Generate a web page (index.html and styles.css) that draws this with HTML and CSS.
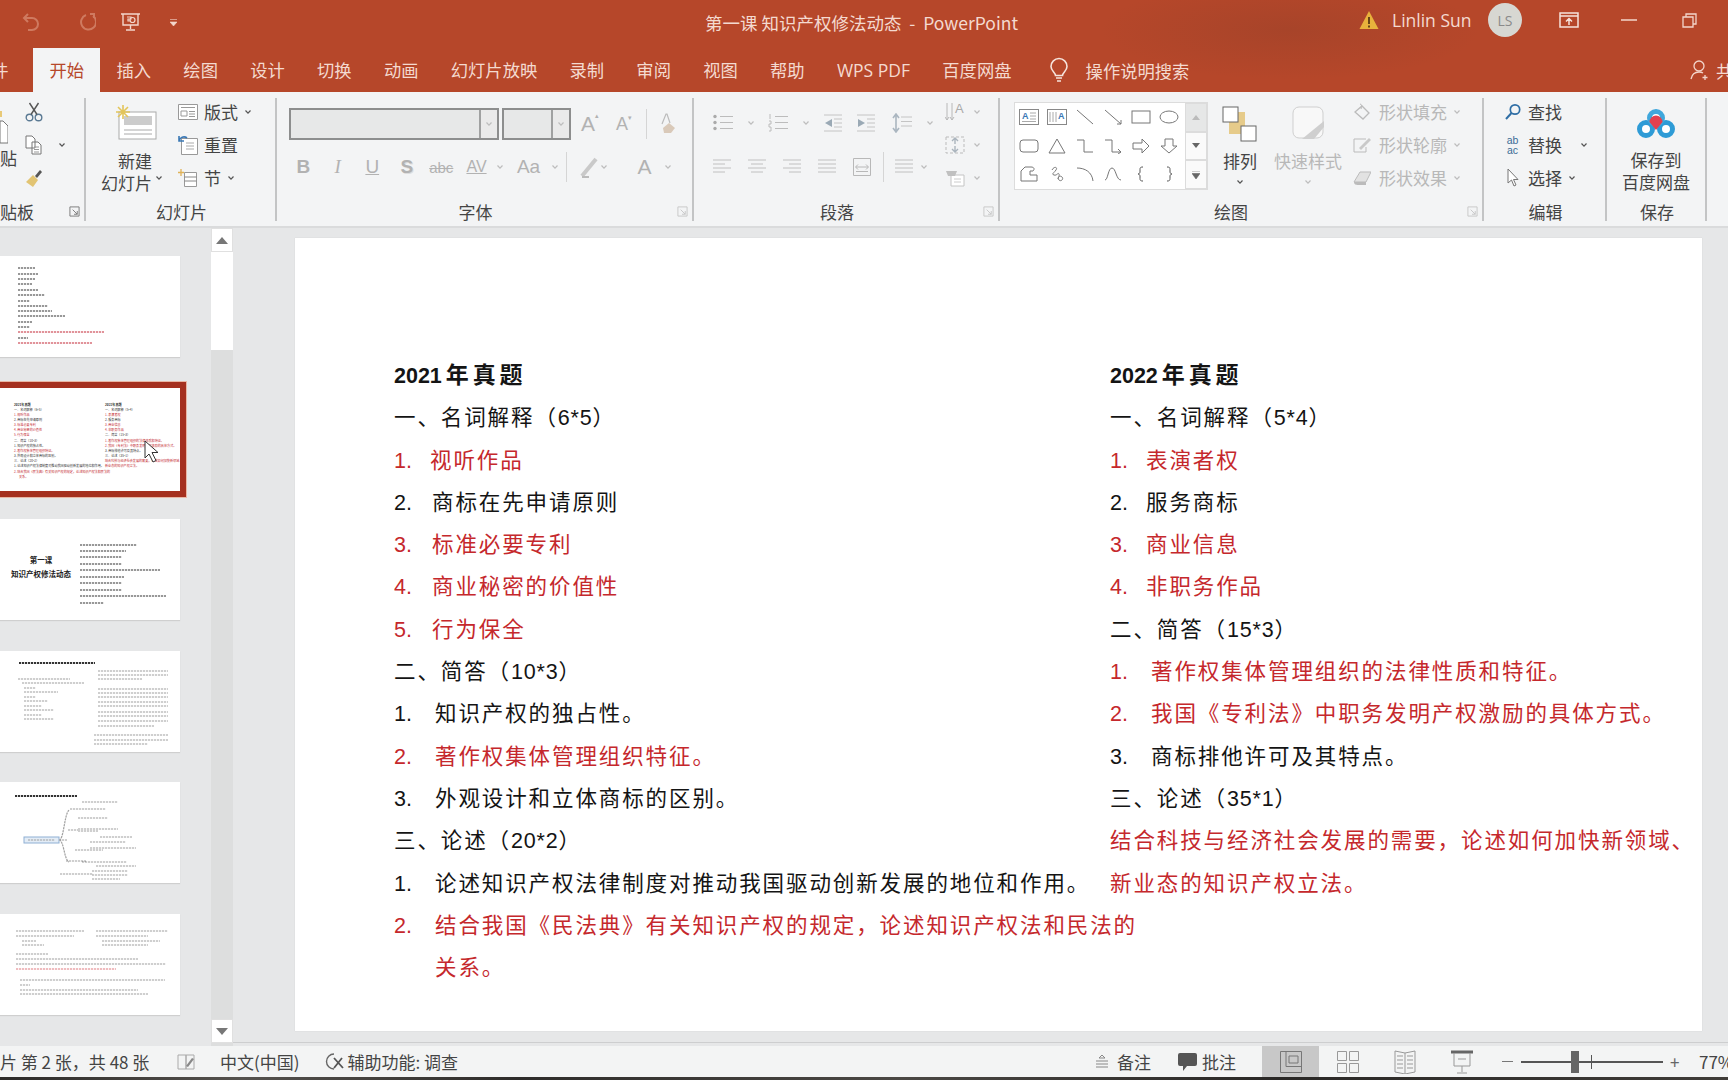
FILE: index.html
```html
<!DOCTYPE html>
<html lang="zh-CN">
<head>
<meta charset="utf-8">
<title>第一课 知识产权修法动态 - PowerPoint</title>
<link rel="stylesheet" href="styles.css">
</head>
<body>
<svg class="defs" width="0" height="0">
  <symbol id="chev" viewBox="0 0 10 10"><path d="M2.5 3.5 5 6.2 7.5 3.5" fill="none" stroke="currentColor" stroke-width="1.2"/></symbol>
  <symbol id="launch" viewBox="0 0 12 12"><path d="M1 1h10v10H1zM4 4l5 5M9 5.5V9H5.5" fill="none" stroke="currentColor" stroke-width="1"/></symbol>
</svg>
<div class="app">
  <header class="top">
    <div class="titlebar">
      <div class="qat">
        <svg class="qi q-undo" width="18" height="20" viewBox="0 0 18 20"><path d="M6 2 2 6l4 4M2 6h8a5.500 5.500 0 0 1 0 12H6" fill="none" stroke="#cf7a60" stroke-width="2"/></svg>
        <svg class="qi q-redo" width="18" height="20" viewBox="0 0 18 20"><path d="M12 2h4v4M15 4a7.500 7.500 0 1 1-7-1" fill="none" stroke="#cf7a60" stroke-width="2"/></svg>
        <svg class="qi q-show" width="21" height="20" viewBox="0 0 21 20"><path d="M1 2h19M3 2v11h15V2M10.500 13v4M6 18h9" fill="none" stroke="#f3d6cb" stroke-width="1.400"/><path d="M7 5h4v2H8v2h3M15 8a2.500 2.500 0 1 1-5 0 2.500 2.500 0 0 1 5 0z" fill="none" stroke="#f3d6cb" stroke-width="1.200"/></svg>
        <svg class="qi q-more" width="7" height="9" viewBox="0 0 7 9"><path d="M0 1.500h7M0 4h7L3.500 8z" fill="#f3d6cb" stroke="#f3d6cb" stroke-width=".6"/></svg>
      </div>
      <div class="doc-title">第一课 知识产权修法动态 &nbsp;-&nbsp; PowerPoint</div>
      <div class="account">
        <svg width="20" height="20" viewBox="0 0 20 20"><path d="M10 1 19.500 19H.5z" fill="#e8b23c"/><path d="M10 7v7M10 15.500v2" stroke="#5a3a14" stroke-width="1.800"/></svg>
        <span class="user">Linlin Sun</span>
        <span class="avatar">LS</span>
        <svg class="win w-ribbon" width="20" height="16" viewBox="0 0 20 16"><path d="M1 1h18v14H1zM1 4h18M10 13V7M7 9.500 10 6.500l3 3" fill="none" stroke="#f6e3db" stroke-width="1.500"/></svg>
        <svg class="win w-min" width="16" height="2" viewBox="0 0 16 2"><path d="M0 1h16" stroke="#f3d6cb" stroke-width="1.500"/></svg>
        <svg class="win w-max" width="15" height="15" viewBox="0 0 15 15"><path d="M1 4h10v10H1zM4 4V1h10v10h-3" fill="none" stroke="#f3d6cb" stroke-width="1.300"/></svg>
      </div>
    </div>
    <nav class="tabs">
      <span class="tab tab-file">文件</span>
      <span class="tab tab-on">开始</span>
      <span class="tab">插入</span>
      <span class="tab">绘图</span>
      <span class="tab">设计</span>
      <span class="tab">切换</span>
      <span class="tab">动画</span>
      <span class="tab">幻灯片放映</span>
      <span class="tab">录制</span>
      <span class="tab">审阅</span>
      <span class="tab">视图</span>
      <span class="tab">帮助</span>
      <span class="tab tab-latin">WPS PDF</span>
      <span class="tab">百度网盘</span>
      <svg class="bulb" width="22" height="26" viewBox="0 0 22 26"><path d="M7.500 18.500c0-3-4.500-4.500-4.500-9a8 8 0 0 1 16 0c0 4.500-4.500 6-4.500 9zM8 21h6M9 24h4" fill="none" stroke="#f6e3db" stroke-width="1.600"/></svg>
      <span class="tell">操作说明搜索</span>
      <span class="share">
        <svg width="20" height="22" viewBox="0 0 20 22"><circle cx="9" cy="7" r="5" fill="none" stroke="#f3d6cb" stroke-width="1.300"/><path d="M1 20c1-5 4-7 8-7 1.500 0 3 .3 4 1M15 16v5M12.500 18.500h5" fill="none" stroke="#f3d6cb" stroke-width="1.300"/></svg>
        <span>共享</span>
      </span>
    </nav>
  </header>

  <section class="ribbon">
    <div class="group g-clip">
      <div class="gbody">
        <div class="paste">
          <svg width="8" height="36" viewBox="0 0 8 36"><path d="M-8 2H2v6h-10z" fill="#e8c977"/><path d="M0 12h3l5 5v17H0z" fill="#fff" stroke="#777"/></svg>
          <span class="paste-t">粘贴</span>
        </div>
        <div class="col col-clip">
          <div class="row">
            <svg width="18" height="20" viewBox="0 0 18 20"><circle cx="4.500" cy="15.500" r="3.300" fill="none" stroke="#5b7a94" stroke-width="1.400"/><circle cx="13.500" cy="15.500" r="3.300" fill="none" stroke="#5b7a94" stroke-width="1.400"/><path d="M6 12.500 13.500 1M12 12.500 4.500 1" stroke="#555" stroke-width="1.400"/></svg>
          </div>
          <div class="row">
            <svg width="18" height="20" viewBox="0 0 18 20"><path d="M1 1h6l3 3v9H1zM7 7h6l3 3v9H7z" fill="#fff" stroke="#777"/><path d="M9 12h5M9 14.500h5M9 17h5" stroke="#999"/></svg>
            <svg class="dd dd-clip"><use href="#chev"/></svg>
          </div>
          <div class="row">
            <svg width="18" height="20" viewBox="0 0 18 20"><path d="M10 8 15 2l2 2-5 6z" fill="#555"/><path d="M8 7l5 5-5 7-7-5z" fill="#e2c473"/></svg>
          </div>
        </div>
      </div>
      <div class="glabel clip-label"><span>粘贴板</span><svg class="launcher"><use href="#launch"/></svg></div>
    </div>

    <div class="group g-slides">
      <div class="gbody">
        <div class="bigbtn bb-new">
          <svg width="42" height="36" viewBox="0 0 42 36"><rect x="4" y="8" width="37" height="27" fill="#fff" stroke="#aaa"/><rect x="9" y="12" width="28" height="9" fill="#ccc"/><path d="M9 26h28M9 30h28" stroke="#aaa"/><path d="M8 1v14M1 8h14M3 3l10 10M13 3 3 13" stroke="#e3c55a" stroke-width="1.600"/></svg>
          <span class="t2">新建</span>
          <span class="t2 t2-shift">幻灯片<svg class="dd"><use href="#chev"/></svg></span>
        </div>
        <div class="col col-slides">
          <div class="row"><svg width="20" height="16" viewBox="0 0 20 16"><path d="M.5.5h19v15H.5z" fill="#fff" stroke="#999"/><path d="M3 3.500h14M3 7h6v5H3zM11 7.500h6M11 10h6M11 12.500h6" stroke="#999" fill="none"/></svg><span class="rt">版式</span><svg class="dd"><use href="#chev"/></svg></div>
          <div class="row"><svg width="20" height="20" viewBox="0 0 20 20"><path d="M3.500 3.500h16v16h-16z" fill="#fff" stroke="#999"/><path d="M8 8h8M8 11h8M8 14h8" stroke="#aaa"/><path d="M1 6a5 5 0 0 1 8-3M1 1v5h5" fill="none" stroke="#3a78b5" stroke-width="1.600"/></svg><span class="rt">重置</span></div>
          <div class="row"><svg width="20" height="20" viewBox="0 0 20 20"><path d="M6.500 4.500h12v14h-12z" fill="#fff" stroke="#999"/><path d="M6.500 9h12M6.500 13h12" stroke="#888"/><path d="M3 1v7M0 4.500h6" stroke="#e0b257" stroke-width="1.300"/></svg><span class="rt sec">节</span><svg class="dd"><use href="#chev"/></svg></div>
        </div>
      </div>
      <div class="glabel"><span>幻灯片</span></div>
    </div>

    <div class="group g-font">
      <div class="gbody fontbody">
        <div class="frow">
          <div class="combo c-name"><i></i><b><svg class="dd off"><use href="#chev"/></svg></b></div>
          <div class="combo c-size"><i></i><b><svg class="dd off"><use href="#chev"/></svg></b></div>
          <span class="lt a-up">A<sup>▴</sup></span>
          <span class="lt a-dn">A<sup>▾</sup></span>
          <span class="vsep"></span>
          <svg class="clear" width="16" height="22" viewBox="0 0 16 22"><path d="M1 11 5 1h1l3 9" fill="none" stroke="#bbb" stroke-width="1.200"/><path d="M3 20l-1-5 6-5 6 5-4 5z" fill="#d9c9b9"/></svg>
        </div>
        <div class="frow frow2">
          <span class="fb f-b">B</span>
          <span class="fb f-i">I</span>
          <span class="fb f-u">U</span>
          <span class="fb f-s">S</span>
          <span class="fb f-abc">abc</span>
          <span class="fb f-av">AV</span>
          <svg class="dd off"><use href="#chev"/></svg>
          <span class="fb f-aa">Aa</span>
          <svg class="dd off"><use href="#chev"/></svg>
          <span class="vsep vsep-b"></span>
          <svg class="fmark" width="20" height="24" viewBox="0 0 20 24"><path d="M3 21 17 4" stroke="#c9c9c9" stroke-width="4"/><path d="M3 22h7" stroke="#bbb" stroke-width="2"/></svg>
          <svg class="dd off dd-m"><use href="#chev"/></svg>
          <span class="fb f-a">A</span>
          <svg class="dd off"><use href="#chev"/></svg>
        </div>
      </div>
      <div class="glabel label-shift"><span>字体</span><svg class="launcher off"><use href="#launch"/></svg></div>
    </div>

    <div class="group g-para">
      <div class="gbody parabody">
        <div class="pmain">
          <div class="prow">
            <svg class="pi" width="20" height="20" viewBox="0 0 20 20"><g fill="none" stroke="#bcbcbc"><path d="M7 3.500h13M7 9.500h13M7 15.500h13"/></g><g fill="#aaa"><circle cx="2" cy="3.500" r="1.700"/><circle cx="2" cy="9.500" r="1.700"/><circle cx="2" cy="15.500" r="1.700"/></g></svg>
            <svg class="dd off"><use href="#chev"/></svg>
            <svg class="pi" width="20" height="20" viewBox="0 0 20 20"><path d="M7 3.500h13M7 9.500h13M7 15.500h13M2 1v5M1 8h2v3H1v3h2v4H1" fill="none" stroke="#bcbcbc"/></svg>
            <svg class="dd off"><use href="#chev"/></svg>
            <svg class="pi" width="20" height="20" viewBox="0 0 20 20"><path d="M1 2h18M11 6h8M11 10h8M11 14h8M1 18h18" stroke="#c4c4c4" fill="none"/><path d="M9 6v8L2 10z" fill="#9aa9b5"/></svg>
            <svg class="pi pi-i" width="20" height="20" viewBox="0 0 20 20"><path d="M1 2h18M11 6h8M11 10h8M11 14h8M1 18h18" stroke="#c4c4c4" fill="none"/><path d="M2 6v8l7-4z" fill="#9aa9b5"/></svg>
            <svg class="pi pi-l" width="20" height="20" viewBox="0 0 20 20"><path d="M9 4h11M9 8.500h11M9 13h11" stroke="#c4c4c4" fill="none"/><path d="M4 1v18M1 5l3-4 3 4M1 15l3 4 3-4" fill="none" stroke="#aab6c0" stroke-width="1.600"/></svg>
            <svg class="dd off"><use href="#chev"/></svg>
          </div>
          <div class="prow prow2">
            <svg class="al" width="18" height="18" viewBox="0 0 18 18"><path d="M0 2h18M0 6h12M0 10h18M0 14h12" stroke="#c0c0c0" fill="none"/></svg>
            <svg class="al" width="18" height="18" viewBox="0 0 18 18"><path d="M0 2h18M3 6h12M0 10h18M3 14h12" stroke="#c0c0c0" fill="none"/></svg>
            <svg class="al" width="18" height="18" viewBox="0 0 18 18"><path d="M0 2h18M6 6h12M0 10h18M6 14h12" stroke="#c0c0c0" fill="none"/></svg>
            <svg class="al" width="18" height="18" viewBox="0 0 18 18"><path d="M0 2h18M0 6h18M0 10h18M0 14h18" stroke="#c0c0c0" fill="none"/></svg>
            <svg class="al al-d" width="18" height="18" viewBox="0 0 18 18"><path d="M.5.500h17v17H.5zM3 9h12M5 6.500 2.500 9 5 11.500M13 6.500 15.500 9 13 11.500M3 13.500h12" stroke="#b8b8b8" fill="none"/></svg>
            <span class="vsep vsep-p"></span>
            <svg class="al al-last" width="18" height="18" viewBox="0 0 18 18"><path d="M0 2h18M0 6h18M0 10h18M0 14h18" stroke="#c0c0c0" fill="none"/></svg>
            <svg class="dd off"><use href="#chev"/></svg>
          </div>
        </div>
        <div class="col col-dir">
          <div class="row"><svg width="20" height="20" viewBox="0 0 20 20"><path d="M2 1v17M7 1v17M0 15l2 3 2-3M5 15l2 3 2-3" stroke="#b8b8b8" fill="none"/><text class="dirA" x="10" y="11">A</text></svg><svg class="dd off"><use href="#chev"/></svg></div>
          <div class="row"><svg width="20" height="18" viewBox="0 0 20 18"><path d="M1 1h18v16H1z" fill="none" stroke="#bbb" stroke-dasharray="3 2"/><path d="M10 2v6M10 16v-6M7 5l3-3 3 3M7 13l3 3 3-3" stroke="#aab4bd" stroke-width="1.400" fill="none"/></svg><svg class="dd off"><use href="#chev"/></svg></div>
          <div class="row"><svg width="20" height="18" viewBox="0 0 20 18"><path d="M6 6h13v11H6z" fill="#fff" stroke="#c4c4c4"/><path d="M1 2h11l-2 5H3z" fill="#c0c0c0"/><path d="M9 10h7M9 13h7" stroke="#ccc"/></svg><svg class="dd off"><use href="#chev"/></svg></div>
        </div>
      </div>
      <div class="glabel label-shift"><span>段落</span><svg class="launcher off"><use href="#launch"/></svg></div>
    </div>

    <div class="group g-draw">
      <div class="gbody drawbody">
        <div class="gallery">
          <div class="shapes">
            <svg viewBox="0 0 20 16"><rect x=".5" y=".5" width="19" height="15" fill="#fff" stroke="#888"/><path d="M11 4h6M11 7h6M11 10h6M3 12.500h14" stroke="#aaa"/><text class="shapeA" x="3" y="10">A</text></svg>
            <svg viewBox="0 0 20 16"><rect x=".5" y=".5" width="19" height="15" fill="#fff" stroke="#888"/><path d="M3 3v10M6 3v10M9 3v10" stroke="#aaa"/><text class="shapeA" x="11" y="10">A</text></svg>
            <svg viewBox="0 0 20 16"><path d="M2 1 18 15" stroke="#777"/></svg>
            <svg viewBox="0 0 20 16"><path d="M2 1 18 15M14 15h4v-4" stroke="#777" fill="none"/></svg>
            <svg viewBox="0 0 20 16"><rect x="1" y="2" width="18" height="12" fill="none" stroke="#777"/></svg>
            <svg viewBox="0 0 20 16"><ellipse cx="10" cy="8" rx="9" ry="6" fill="none" stroke="#777"/></svg>
            <svg viewBox="0 0 20 16"><rect x="1" y="2" width="18" height="12" rx="3" fill="none" stroke="#777"/></svg>
            <svg viewBox="0 0 20 16"><path d="M10 1 18 15H2z" fill="none" stroke="#777"/></svg>
            <svg viewBox="0 0 20 16"><path d="M2 2h7v12h9" fill="none" stroke="#777"/></svg>
            <svg viewBox="0 0 20 16"><path d="M2 2h7v12h9M15 11l3 3-3 2" fill="none" stroke="#777"/></svg>
            <svg viewBox="0 0 20 16"><path d="M2 5h9V1l7 7-7 7v-4H2z" fill="none" stroke="#777"/></svg>
            <svg viewBox="0 0 20 16"><path d="M6 1h8v7h4l-8 7-8-7h4z" fill="none" stroke="#777"/></svg>
            <svg viewBox="0 0 20 16"><path d="M2 5 6 1h6c3 0 4 2 2 4h-3v4h7v6H2z" fill="none" stroke="#777"/></svg>
            <svg viewBox="0 0 20 16"><path d="M5 4c2-4 6-3 4 0S4 8 7 9s4-3 5-1-2 4 0 6 5-1 3-3-4 0-4 2" fill="none" stroke="#777"/></svg>
            <svg viewBox="0 0 20 16"><path d="M2 2c8 0 15 4 16 13" fill="none" stroke="#777"/></svg>
            <svg viewBox="0 0 20 16"><path d="M2 14C5 14 5 2 9 2s4 12 9 12" fill="none" stroke="#777"/></svg>
            <svg viewBox="0 0 20 16"><path d="M12 1c-3 0-3 1-3 3v2c0 1-1 2-2 2 1 0 2 1 2 2v2c0 2 0 3 3 3" fill="none" stroke="#555"/></svg>
            <svg viewBox="0 0 20 16"><path d="M8 1c3 0 3 1 3 3v2c0 1 1 2 2 2-1 0-2 1-2 2v2c0 2 0 3-3 3" fill="none" stroke="#555"/></svg>
          </div>
          <div class="gscroll">
            <span class="gs gs-up"><svg width="8" height="6" viewBox="0 0 8 6"><path d="M0 6 4 1l4 5z" fill="#bbb"/></svg></span>
            <span class="gs"><svg width="8" height="6" viewBox="0 0 8 6"><path d="M0 0h8L4 5z" fill="#666"/></svg></span>
            <span class="gs"><svg width="8" height="8" viewBox="0 0 8 8"><path d="M0 0h8M0 2.500h8L4 8z" fill="#666" stroke="#666" stroke-width=".6"/></svg></span>
          </div>
        </div>
        <div class="bigbtn bb-arr">
          <svg width="36" height="36" viewBox="0 0 36 36"><rect x="7" y="6" width="16" height="22" fill="#e6cb8a"/><rect x="1" y="1" width="15" height="15" fill="#fff" stroke="#666"/><rect x="19" y="20" width="15" height="15" fill="#fff" stroke="#666"/></svg>
          <span class="t2">排列</span>
          <svg class="dd"><use href="#chev"/></svg>
        </div>
        <div class="bigbtn bb-quick off-t">
          <svg width="36" height="36" viewBox="0 0 36 36"><rect x="3" y="1" width="30" height="31" rx="6" fill="#f8f8f8" stroke="#cfcfcf"/><path d="M12 33 34 15v6L24 33z" fill="#cfcfcf"/></svg>
          <span class="t2">快速样式</span>
          <svg class="dd off"><use href="#chev"/></svg>
        </div>
        <div class="col col-style off-t">
          <div class="row"><svg width="18" height="18" viewBox="0 0 18 18"><path d="M2 9 9 3l7 7-6 6z" fill="none" stroke="#bbb" stroke-width="1.300"/><path d="M7 1c2 0 2 3 1 5" fill="none" stroke="#bbb"/></svg><span class="rt">形状填充</span><svg class="dd off"><use href="#chev"/></svg></div>
          <div class="row"><svg width="18" height="18" viewBox="0 0 18 18"><path d="M1 3h12M1 3v13h12v-5" fill="none" stroke="#bbb"/><path d="M6 12 16 2l2 2L8 14z" fill="#c9c9c9"/></svg><span class="rt">形状轮廓</span><svg class="dd off"><use href="#chev"/></svg></div>
          <div class="row"><svg width="18" height="18" viewBox="0 0 18 18"><path d="M1 13 7 3h11l-5 10z" fill="#e2e2e2" stroke="#bbb"/><path d="M1 13c0 3 3 3 5 3h7l0-3z" fill="#bbb"/></svg><span class="rt">形状效果</span><svg class="dd off"><use href="#chev"/></svg></div>
        </div>
      </div>
      <div class="glabel draw-label"><span>绘图</span><svg class="launcher off"><use href="#launch"/></svg></div>
    </div>

    <div class="group g-edit">
      <div class="gbody">
        <div class="col col-edit">
          <div class="row"><span class="edit-i"><svg width="16" height="17" viewBox="0 0 16 17"><circle cx="10" cy="6.500" r="4.700" fill="none" stroke="#2f6ea5" stroke-width="1.700"/><path d="M6.500 10 1 16" stroke="#2f6ea5" stroke-width="2"/></svg></span><span class="rt">查找</span></div>
          <div class="row"><span class="edit-i edit-ab">ab<br>ac</span><span class="rt">替换</span><svg class="dd dd-rep"><use href="#chev"/></svg></div>
          <div class="row"><span class="edit-i"><svg width="14" height="20" viewBox="0 0 14 20"><path d="M2 1v14l3.500-3 2.500 6 2-1-2.500-5.500h4.500z" fill="#fff" stroke="#777"/></svg></span><span class="rt">选择</span><svg class="dd"><use href="#chev"/></svg></div>
        </div>
      </div>
      <div class="glabel"><span>编辑</span></div>
    </div>

    <div class="group g-save">
      <div class="gbody">
        <div class="bigbtn bb-save">
          <svg width="38" height="32" viewBox="0 0 38 32"><circle cx="9" cy="21" r="6.500" fill="#fff" stroke="#2e9bd6" stroke-width="5"/><circle cx="29" cy="21" r="6.500" fill="#fff" stroke="#2e9bd6" stroke-width="5"/><circle cx="19" cy="10" r="6.500" fill="#fff" stroke="#3fa7dc" stroke-width="5"/><path d="M19 22 12.500 14a6 6 0 0 1 13 0z" fill="#e2404f"/></svg>
          <span class="t2 save-t1">保存到</span>
          <span class="t2">百度网盘</span>
        </div>
      </div>
      <div class="glabel"><span>保存</span></div>
    </div>
  </section>

  <main class="workspace">
    <aside class="thumbs">
      <div class="thumb">
        <svg viewBox="0 0 180 101"><g class="dash"><path d="M18 12h17M18 18h20M18 23h17M18 28h14M18 34h20M18 39h27M18 45h12M18 50h30M18 55h34M18 60h47M18 66h14"/><path class="dash-r" d="M18 76h86M18 87h74"/><path d="M18 71h12M18 82h10"/></g></svg>
      </div>
      <div class="thumb thumb-on">
        <div class="mini">
          <div class="mini-col">
            <p class="mh">2021年真题</p><p>一、名词解释（6*5）</p><p class="r">1. 视听作品</p><p>2. 商标在先申请原则</p><p class="r">3. 标准必要专利</p><p class="r">4. 商业秘密的价值性</p><p class="r">5. 行为保全</p><p>二、简答（10*3）</p><p>1. 知识产权的独占性。</p><p class="r">2. 著作权集体管理组织特征。</p><p>3. 外观设计和立体商标的区别。</p><p>三、论述（20*2）</p><p>1. 论述知识产权法律制度对推动我国驱动创新发展的地位和作用。</p><p class="r">2. 结合我国《民法典》有关知识产权的规定，论述知识产权法和民法的</p><p class="r ind">关系。</p>
          </div>
          <div class="mini-col">
            <p class="mh">2022年真题</p><p>一、名词解释（5*4）</p><p class="r">1. 表演者权</p><p>2. 服务商标</p><p class="r">3. 商业信息</p><p class="r">4. 非职务作品</p><p>二、简答（15*3）</p><p class="r">1. 著作权集体管理组织的法律性质和特征。</p><p class="r">2. 我国《专利法》中职务发明产权激励的具体方式。</p><p>3. 商标排他许可及其特点。</p><p>三、论述（35*1）</p><p class="r">结合科技与经济社会发展的需要，论述如何加快新领域、</p><p class="r">新业态的知识产权立法。</p>
          </div>
        </div>
        <svg class="pointer" width="16" height="24" viewBox="0 0 16 24"><path d="M1 1v17l4-4 4 8 3-1.500-4-8h6z" fill="#fff" stroke="#333"/></svg>
      </div>
      <div class="thumb thumb-title">
        <div class="ttl"><strong>第一课</strong><strong>知识产权修法动态</strong></div>
        <svg viewBox="0 0 180 101"><g class="dash"><path d="M80 26h57M80 32h46M80 38h42M80 45h42M80 51h80M80 58h44M80 64h42M80 71h42M80 77h86M80 84h24"/></g></svg>
      </div>
      <div class="thumb">
        <svg viewBox="0 0 180 101"><g class="dash thin"><path class="dash-b" d="M19 12h76"/><path d="M18 28h52M22 32h62M24 37h12M24 41h34M24 46h12M24 50h24M24 55h18M24 59h30M24 64h18M24 68h30M98 20h70M98 24h70M98 28h44M98 38h70M98 42h70M98 46h70M98 51h70M98 55h70M98 61h70M98 65h70M98 70h70M98 75h56M94 84h74M94 89h74M94 93h54"/></g></svg>
      </div>
      <div class="thumb">
        <svg viewBox="0 0 180 101"><g class="dash"><path class="dash-b" d="M15 14h62"/></g><rect x="24" y="55" width="35" height="6" fill="#e3ecf6" stroke="#8fb0d4"/><g class="dash thin map"><path d="M28 58h27M82 20h36M70 27h36M78 36h30M78 47h40M78 49h20M68 48h10M100 55h32M90 60h36M75 68h28M90 66h46M82 80h45M66 79h20M96 84h40M60 92h33M92 89h36M92 93h36M92 97h28"/><path d="M59 58c5 0 5-25 10-30M59 58h8M59 58c5 0 5 20 10 22"/></g></svg>
      </div>
      <div class="thumb">
        <svg viewBox="0 0 180 101"><g class="dash thin"><path d="M16 17h68M96 17h72M16 22h58M96 22h52M22 27h14M102 27h58M22 31h22M102 31h46M16 40h32M16 45h122M16 50h150"/><path class="dash-r" d="M16 55h100M16 50h0"/><path d="M20 66h145M20 71h10M20 76h118M20 80h128"/></g></svg>
      </div>
    </aside>
    <div class="vscroll">
      <span class="sbtn"><svg width="12" height="7" viewBox="0 0 12 7"><path d="M0 7 6 0l6 7z" fill="#777"/></svg></span>
      <span class="sthumb"></span>
      <span class="strack"></span>
      <span class="sbtn"><svg width="12" height="7" viewBox="0 0 12 7"><path d="M0 0h12L6 7z" fill="#777"/></svg></span>
    </div>
    <div class="stage">
      <article class="slide">
        <div class="scol scol-a">
          <p class="h"><span class="lat">2021</span>年真题</p>
          <p>一、名词解释（<span class="lat">6*5</span>）</p>
          <p class="red"><span class="n n-s">1.</span>视听作品</p>
          <p><span class="n">2.</span>商标在先申请原则</p>
          <p class="red"><span class="n">3.</span>标准必要专利</p>
          <p class="red"><span class="n">4.</span>商业秘密的价值性</p>
          <p class="red"><span class="n">5.</span>行为保全</p>
          <p>二、简答（<span class="lat">10*3</span>）</p>
          <p><span class="n n-w">1.</span>知识产权的独占性。</p>
          <p class="red"><span class="n n-w">2.</span>著作权集体管理组织特征。</p>
          <p><span class="n n-w">3.</span>外观设计和立体商标的区别。</p>
          <p>三、论述（<span class="lat">20*2</span>）</p>
          <p><span class="n n-w">1.</span>论述知识产权法律制度对推动我国驱动创新发展的地位和作用。</p>
          <p class="red"><span class="n n-w">2.</span>结合我国《民法典》有关知识产权的规定，论述知识产权法和民法的</p>
          <p class="red"><span class="n n-w"></span>关系。</p>
        </div>
        <div class="scol">
          <p class="h"><span class="lat">2022</span>年真题</p>
          <p>一、名词解释（<span class="lat">5*4</span>）</p>
          <p class="red"><span class="n n-s">1.</span>表演者权</p>
          <p><span class="n n-s">2.</span>服务商标</p>
          <p class="red"><span class="n n-s">3.</span>商业信息</p>
          <p class="red"><span class="n n-s">4.</span>非职务作品</p>
          <p>二、简答（<span class="lat">15*3</span>）</p>
          <p class="red"><span class="n n-w">1.</span>著作权集体管理组织的法律性质和特征。</p>
          <p class="red"><span class="n n-w">2.</span>我国《专利法》中职务发明产权激励的具体方式。</p>
          <p><span class="n n-w">3.</span>商标排他许可及其特点。</p>
          <p>三、论述（<span class="lat">35*1</span>）</p>
          <p class="red">结合科技与经济社会发展的需要，论述如何加快新领域、</p>
          <p class="red">新业态的知识产权立法。</p>
        </div>
      </article>
    </div>
  </main>

  <footer class="status">
    <span class="st st-count">幻灯片 第 2 张，共 48 张</span>
    <svg class="st-note" width="18" height="16" viewBox="0 0 18 16"><path d="M1 1h8v14H1zM9 1h8v14H9z" fill="none" stroke="#aaa"/><path d="M9 12l6-8 2 1-6 8z" fill="#888"/></svg>
    <span class="st st-lang">中文(中国)</span>
    <svg class="st-acc" width="20" height="20" viewBox="0 0 20 20"><path d="M9 2a7 7 0 1 0 0 15" fill="none" stroke="#666" stroke-width="1.400"/><path d="M9 6 18 16M17 6l-8 10" stroke="#555" stroke-width="1.800"/></svg>
    <span class="st">辅助功能: 调查</span>
    <span class="st-right">
      <svg class="st-ni" width="12" height="14" viewBox="0 0 12 14"><path d="M6 0 3 3h6zM0 6h12M0 9h12M0 12h12" fill="none" stroke="#888"/></svg>
      <span class="st st-bz">备注</span>
      <svg class="st-ci" width="19" height="18" viewBox="0 0 19 18"><path d="M2 0h15a2 2 0 0 1 2 2v9a2 2 0 0 1-2 2H9l-4 5v-5H2a2 2 0 0 1-2-2V2a2 2 0 0 1 2-2z" fill="#555"/></svg>
      <span class="st st-pz">批注</span>
      <span class="view view-on"><svg width="22" height="22" viewBox="0 0 22 22"><path d="M.5.500h21v21H.5zM6 .5v15h15.500M9 5h9v7H9z" fill="none" stroke="#777"/></svg></span>
      <span class="view"><svg width="22" height="22" viewBox="0 0 22 22"><path d="M.5.500h9v9h-9zM12.500.5h9v9h-9zM.5 12.500h9v9h-9zM12.500 12.500h9v9h-9z" fill="none" stroke="#999"/></svg></span>
      <span class="view"><svg width="22" height="24" viewBox="0 0 22 24"><path d="M1 1l10 2 10-2v21l-10 2L1 22zM11 3v21M3 6h6M3 10h6M3 14h6M3 18h6M13 6h6M13 10h6M13 14h6M13 18h6" fill="none" stroke="#999"/></svg></span>
      <span class="view"><svg width="22" height="24" viewBox="0 0 22 24"><path d="M0 2h22" stroke="#666" stroke-width="3"/><path d="M3 3v13h16V3M11 16v6M6 23h10M7 9h8" fill="none" stroke="#999"/></svg></span>
      <span class="zoom">
        <i class="z-minus"></i>
        <span class="z-track"><span class="z-mid"></span><span class="z-knob"></span></span>
        <span class="z-plus">+</span>
        <span class="st z-val">77%</span>
      </span>
    </span>
  </footer>
  <div class="under"></div>
</div>
</body>
</html>
```

FILE: styles.css
```css
* { box-sizing: border-box; }
html, body { margin: 0; height: 100%; overflow: hidden; }
body {
  font-family: "Noto Sans CJK SC", "Noto Sans", sans-serif;
  background: #e6e7e8;
  color: #444;
}
.defs { position: absolute; }
.app { width: 1728px; height: 1080px; display: flex; flex-direction: column; overflow: hidden; }
p { margin: 0; }
svg { flex: none; display: block; }

/* title bar and tabs */
.top {
  height: 92px;
  background:
    radial-gradient(ellipse 190px 50px at 1290px 30px, rgba(130, 60, 40, .28), transparent),
    #b6472a;
  color: #f4dad0;
}
.titlebar { height: 48px; display: flex; align-items: center; }
.qat { width: 705px; display: flex; align-items: center; padding-bottom: 4px; }
.q-undo { margin-left: 22px; }
.q-redo { margin-left: 38px; }
.q-show { margin-left: 24px; }
.q-more { margin-left: 29px; }
.doc-title { font-size: 17.500px; padding-bottom: 4px; white-space: nowrap; }
.account { margin-left: auto; display: flex; align-items: center; padding-bottom: 8px; }
.user { font-family: "Open Sans", sans-serif; font-size: 17.500px; margin: 0 0 0 13px; width: 96px; }
.avatar {
  width: 34px; height: 34px; border-radius: 50%;
  background: #d7d7d2; color: #8a8a8a;
  font-family: "Open Sans", sans-serif; font-size: 14px;
  display: flex; align-items: center; justify-content: center;
}
.w-ribbon { margin-left: 37px; }
.w-min { margin-left: 42px; }
.w-max { margin: 0 31px 0 45px; }
.tabs { height: 44px; display: flex; align-items: center; white-space: nowrap; font-size: 17.300px; }
.tab { padding: 0 16.150px; height: 44px; line-height: 44px; }
.tab-file { width: 33px; padding: 0; text-indent: -26px; overflow: hidden; }
.tab-on { background: #f3f4f5; color: #b6472a; padding: 0 16.400px; }
.tab-latin { font-family: "Open Sans", sans-serif; font-size: 17.500px; }
.bulb { margin-left: 20px; }
.tell { margin-left: 16px; }
.share { margin-left: auto; display: flex; align-items: center; gap: 6px; width: 38px; overflow: hidden; flex: none; }

/* ribbon */
.ribbon {
  height: 136px; display: flex;
  background: #f3f4f5;
  border-bottom: 2px solid #dadbdc;
  padding-top: 3px;
  font-size: 17px;
  color: #444;
}
.group { position: relative; display: flex; flex-direction: column; flex: none; }
.group::after {
  content: ""; position: absolute; right: 0; top: 3px; bottom: 5px;
  width: 2px; background: #c3c4c5;
}
.gbody { height: 99px; display: flex; }
.glabel {
  height: 32px; display: flex; align-items: center; justify-content: center;
  position: relative; padding-top: 3px; white-space: nowrap;
}
.label-shift { padding-right: 20px; }
.launcher { position: absolute; right: 6px; top: 12px; width: 11px; height: 11px; color: #777; }
.launcher.off { color: #c6c6c6; }
.dd { width: 10px; height: 10px; color: #555; margin-left: 5px; }
.dd.off { color: #bdbdbd; margin-left: 0; }
.col { display: flex; flex-direction: column; }
.row { height: 33px; display: flex; align-items: center; white-space: nowrap; }
.rt { margin-left: 6px; }
.bigbtn { display: flex; flex-direction: column; align-items: center; white-space: nowrap; line-height: 22px; }
.t2 { display: flex; align-items: center; }
.off-t { color: #b8b8b8; }

.g-clip { width: 86px; }
.paste { width: 25px; padding-top: 14px; overflow: hidden; }
.paste-t { display: block; margin: 2px 0 0 -17px; white-space: nowrap; line-height: 22px; }
.dd-clip { margin-left: 14px; }
.clip-label { justify-content: flex-start; }
.clip-label span { margin-left: -17px; }

.g-slides { width: 191px; }
.bb-new { width: 68px; margin-left: 15px; padding-top: 9px; }
.bb-new svg:first-child { margin: 0 0 10px 2px; }
.bb-new .t2-shift { align-self: flex-start; margin-left: 0; }
.col-slides { margin-left: 9px; }
.sec { margin-left: 6px; }

.g-font { width: 417px; }
.fontbody { flex-direction: column; padding: 13px 0 0 12px; }
.frow { display: flex; align-items: center; height: 32px; }
.frow2 { margin-top: 11px; color: #b2b2b2; font-family: "Liberation Sans", sans-serif; font-size: 19px; margin-left: -3px; }
.combo { height: 32px; display: flex; background: #e7e8e8; border: 2px solid #8d8e8e; }
.combo i { flex: 1; }
.combo b { width: 18px; border-left: 2px solid #a0a1a1; display: flex; align-items: center; justify-content: center; background: #eaeaea; }
.combo .dd { margin: 0; }
.c-name { width: 210px; }
.c-size { width: 69px; margin-left: 3px; }
.lt { font-family: "Liberation Sans", sans-serif; color: #b2b2b2; display: flex; }
.lt sup { font-size: 7px; line-height: 8px; }
.a-up { font-size: 21px; margin-left: 10px; width: 35px; }
.a-dn { font-size: 18px; width: 30px; }
.vsep { width: 1px; height: 30px; background: #d5d5d5; display: block; }
.clear { margin-left: 14px; }
.fb { display: block; width: 34.500px; text-align: center; }
.f-b { font-weight: 700; }
.f-i { font-style: italic; font-family: "Liberation Serif", serif; }
.f-u { text-decoration: underline; }
.f-s { font-weight: 700; text-shadow: 1px 1px 0 #ddd; }
.f-abc { font-size: 15px; text-decoration: line-through; }
.f-av { font-size: 16px; text-decoration: underline; width: 36px; }
.f-aa { margin-left: 3px; width: 42px; }
.f-a { width: 36px; font-size: 21px; margin-left: 16px; }
.vsep-b { margin-left: 6px; }
.fmark { margin-left: 12px; }
.dd-m { margin: 0 2px 0 16px; }

.g-para { width: 306px; }
.parabody { padding: 6px 0 0 19px; }
.pmain { width: 232px; }
.prow { height: 44px; display: flex; align-items: center; }
.prow .dd { margin: 0 12px 0 13px; }
.pi-i { margin-left: 13px; }
.pi-l { margin-left: 16px; }
.al { margin-right: 17px; }
.al-d { margin-right: 12px; }
.al-last { margin-right: 6px; }
.vsep-p { margin-right: 11px; }
.prow2 .dd { margin: 0; }
.col-dir { margin: -6px 0 0 0; }
.col-dir .row { gap: 7px; }
.dirA { font-family: "Liberation Sans", sans-serif; font-size: 13px; fill: #aaa; }

.g-draw { width: 484px; }
.drawbody { padding: 8px 0 0 15px; }
.gallery { width: 192px; height: 86px; display: flex; background: #fff; box-shadow: 0 0 0 1px #dcdcdc; }
.shapes { width: 170px; display: grid; grid-template-columns: repeat(6, 28px); grid-template-rows: repeat(3, 28.600px); }
.shapes svg { width: 20px; height: 16px; place-self: center; }
.shapeA { font-family: "Liberation Sans", sans-serif; font-size: 9px; font-weight: 700; fill: #3a78b5; }
.gscroll { width: 22px; display: flex; flex-direction: column; }
.gs { flex: 1; display: flex; align-items: center; justify-content: center; border: 1px solid #dcdcdc; background: #fafafa; }
.gs-up { background: #e6e7e7; }
.bb-arr { width: 40px; margin-left: 13px; padding-top: 3px; }
.bb-arr svg:first-child, .bb-quick svg:first-child { margin-bottom: 8px; }
.bb-arr .dd, .bb-quick .dd { margin: 5px 0 0; }
.bb-quick { width: 70px; margin-left: 13px; padding-top: 3px; }
.col-style { margin: -8px 0 0 10px; }
.col-style .rt { margin-left: 8px; margin-right: 5px; }
.draw-label { justify-content: flex-start; padding-left: 214px; }

.g-edit { width: 123px; }
.col-edit { margin-left: 19px; }
.edit-i { width: 19px; display: flex; justify-content: center; align-items: center; }
.edit-ab { display: block; font-family: "Liberation Sans", sans-serif; font-size: 10.500px; line-height: 10px; text-align: center; color: #3b6c96; }
.col-edit .rt { margin-left: 6px; }
.dd-rep { margin-left: 17px; }

.g-save { width: 100px; }
.bb-save { width: 98px; padding-top: 13px; }
.bb-save svg { margin-bottom: 9px; }

/* thumbnail pane */
.workspace { flex: 1; display: flex; min-height: 0; }
.thumbs { width: 211px; padding-top: 28px; display: flex; flex-direction: column; gap: 30.500px; flex: none; }
.thumb { position: relative; width: 180px; height: 101px; background: #fff; box-shadow: 0 1px 1px #cfcfcf; flex: none; }
.thumb svg { display: block; width: 100%; height: 100%; }
.dash { fill: none; stroke: #777; stroke-width: 1.500; stroke-dasharray: 2.200 .8; }
.dash.thin { stroke: #a0a0a0; stroke-width: 1.200; }
.dash-r { stroke: #d8707a; }
.thin .dash-r { stroke: #df7a80; }
.dash-b { stroke: #333; stroke-width: 2; }
.map { stroke: #b6c0cf; }
.thumb-on { box-shadow: 0 0 0 6px #a5301f, 0 0 0 7px #e9b7a5; height: 103px; margin: 0 0 -2px; }
.mini { display: flex; padding: 14px 0 0 14px; font-size: 3.100px; line-height: 5.150px; color: #333; white-space: nowrap; height: 100%; overflow: hidden; }
.mini-col { width: 91px; }
.mini .r { color: #c42a30; }
.mini .mh { font-weight: 700; color: #111; }
.mini .ind { padding-left: 5px; }
.thumb .pointer { position: absolute; left: 144px; top: 52px; width: 16px; height: 24px; }
.ttl { position: absolute; left: 10px; top: 36px; width: 62px; display: flex; flex-direction: column; align-items: center; gap: 4px; font-size: 7.500px; line-height: 10px; color: #222; white-space: nowrap; }

.vscroll { width: 22px; display: flex; flex-direction: column; background: #dddede; flex: none; }
.sbtn { height: 24px; background: #fff; display: flex; align-items: center; justify-content: center; box-shadow: 0 0 0 1px #e0e0e0 inset; flex: none; }
.sthumb { height: 98px; background: #fff; flex: none; }
.strack { height: 669px; flex: none; }

/* editing stage and slide */
.stage { flex: 1; height: 815px; padding: 10px 0 0 62px; border-bottom: 1px solid #cdcecf; }
.slide {
  width: 1407px; height: 793px; background: #fff;
  padding: 115px 0 0 99px;
  display: flex;
  box-shadow: 0 0 1px #c8c8c8;
  font-size: 21.500px; letter-spacing: 1.900px;
  color: #141414; white-space: nowrap;
}
.slide p { height: 42.300px; line-height: 42.300px; }
.scol-a { width: 716px; flex: none; }
.slide .h { font-weight: 700; font-size: 23px; letter-spacing: 3.800px; line-height: 40px; }
.lat { letter-spacing: .8px; font-family: "Liberation Sans", sans-serif; }
.h .lat { letter-spacing: 0; margin-right: 4px; font-size: 21.500px; }
.red { color: #c5282c; }
.n { display: inline-block; width: 38px; font-family: "Liberation Sans", sans-serif; letter-spacing: 0; }
.n-s { width: 36px; }
.n-w { width: 41px; }

/* status bar */
.status {
  height: 31px; display: flex; align-items: center;
  background: #f3f4f4; font-size: 17px; color: #444; white-space: nowrap;
  flex: none;
}
.st { display: block; }
.st-count { margin-left: -34px; width: 211px; flex: none; }
.st-lang { margin-left: 25px; }
.st-acc { margin: 0 3px 0 25px; }
.st-right { margin-left: auto; display: flex; align-items: center; height: 31px; }
.st-bz { margin-left: 9px; }
.st-ci { margin-left: 27px; }
.st-pz { margin-left: 5px; }
.view { width: 57px; height: 31px; display: flex; align-items: center; justify-content: center; }
.view-on { background: #c8c8c8; margin-left: 26px; }
.zoom { display: flex; align-items: center; margin-left: 12px; }
.z-minus { width: 11px; height: 1px; background: #777; display: block; }
.z-track { position: relative; width: 142px; height: 2px; background: #555; margin-left: 8px; display: block; }
.z-mid { position: absolute; left: 70px; top: -6px; width: 1px; height: 14px; background: #555; }
.z-knob { position: absolute; left: 50px; top: -10px; width: 8px; height: 22px; background: #666; }
.z-plus { margin-left: 7px; color: #666; width: 14px; }
.z-val { margin-left: 15px; width: 29px; }
.under { height: 3px; background: linear-gradient(90deg, #2c2a28, #55524e 14%, #2e2c2a 30%, #4b4844 52%, #2a2826 74%, #3f3c38); flex: none; }
```
